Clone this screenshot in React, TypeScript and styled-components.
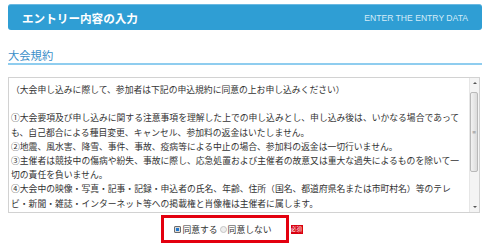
import styled, { createGlobalStyle } from "styled-components";

const GlobalStyle = createGlobalStyle`
    html, body {
        margin: 0;
        padding: 0;
        background: #ffffff;
    }
    body {
        font-family: "Noto Sans CJK JP", "Noto Sans", sans-serif;
        color: #333333;
    }
`

const JP = `"Noto Sans CJK JP", "Noto Sans", sans-serif`;

const TERMS = [
    "（大会申し込みに際して、参加者は下記の申込規約に同意の上お申し込みください）",
    "",
    "①大会要項及び申し込みに関する注意事項を理解した上での申し込みとし、申し込み後は、いかなる場合であって",
    "も、自己都合による種目変更、キャンセル、参加料の返金はいたしません。",
    "②地震、風水害、降雪、事件、事故、疫病等による中止の場合、参加料の返金は一切行いません。",
    "③主催者は競技中の傷病や紛失、事故に際し、応急処置および主催者の故意又は重大な過失によるものを除いて一",
    "切の責任を負いません。",
    "④大会中の映像・写真・記事・記録・申込者の氏名、年齢、住所（国名、都道府県名または市町村名）等のテレ",
    "ビ・新聞・雑誌・インターネット等への掲載権と肖像権は主催者に属します。",
];

const Page = styled.div`
    padding: 4px 7px 0 8px;
    width: 474px;
`

const Header = styled.div`
    height: 26px;
    display: flex;
    align-items: center;
    justify-content: space-between;
    padding: 0 14px;
    background-color: #2f9ed4;
    border-top: 1px solid #6ab9e2;
    border-radius: 3px;
    box-sizing: border-box;
`

const HeaderTitle = styled.div`
    font-family: ${JP};
    font-weight: 700;
    font-size: 11.6px;
    color: #ffffff;
`

const HeaderSub = styled.div`
    font-family: "Liberation Sans", Arial, sans-serif;
    font-size: 8.6px;
    color: #d4ecf8;
`

const SectionTitle = styled.div`
    margin-top: 18px;
    font-family: ${JP};
    font-size: 11.3px;
    line-height: 15px;
    color: #3a8ec8;
    border-bottom: 2px solid #8fcdef;
`

const TermsBox = styled.div`
    margin-top: 12px;
    height: 136px;
    display: flex;
    border: 1px solid #d2d2d2;
    box-sizing: border-box;
    width: 472px;
`

const TermsText = styled.div`
    flex: 1;
    overflow: hidden;
    padding: 5px 0 0 2px;
    font-family: ${JP};
    font-size: 8.8px;
    line-height: 14.2px;
    color: #333333;
    white-space: pre;
`

const ScrollBar = styled.div`
    width: 9px;
    display: flex;
    flex-direction: column;
    background: #f4f4f4;
    border-left: 1px solid #e6e6e6;
`

const ScrollArrow = styled.div<{ $down?: boolean }>`
    height: 10px;
    display: flex;
    align-items: center;
    justify-content: center;
    &::after {
        content: "";
        border-left: 2px solid transparent;
        border-right: 2px solid transparent;
        ${p => p.$down ? "border-top: 2px solid #555;" : "border-bottom: 2px solid #555;"}
    }
`

const ScrollTrack = styled.div`
    flex: 1;
    display: flex;
    flex-direction: column;
`

const ScrollThumb = styled.div`
    margin-top: 4px;
    height: 78px;
    margin-right: 1px;
    border: 1px solid #b9b9b9;
    border-radius: 2px;
    background: linear-gradient(to right, #f2f2f2, #dcdcdc);
    display: flex;
    align-items: center;
    justify-content: center;
    font-family: "DejaVu Sans", sans-serif;
    font-size: 5px;
    color: #888;
`

const AgreeRow = styled.div`
    margin-top: 2px;
    display: flex;
    justify-content: center;
    align-items: center;
    padding-right: 26px;
    gap: 2px;
`

const AgreeBox = styled.div`
    height: 28px;
    box-sizing: border-box;
    border: 3px solid #e3000f;
    display: flex;
    align-items: center;
    padding: 0 12px 0 10px;
`

const Choice = styled.label`
    display: flex;
    align-items: center;
    font-family: ${JP};
    font-size: 8.8px;
    color: #333333;
    margin-right: 2px;
`

const Radio = styled.input`
    appearance: none;
    margin: 0 1px 0 0;
    width: 7px;
    height: 7px;
    box-sizing: border-box;
    border: 1px solid #c4c4c4;
    border-radius: 50%;
    background: #eeeeee;
    &:checked {
        border: 1px solid #6c6c6c;
        border-radius: 1px;
        background: radial-gradient(circle, #1f78cf 0 1.6px, #dadada 2px);
    }
`

const Badge = styled.span`
    width: 12px;
    height: 9px;
    margin-top: 1px;
    background: #d9000f;
    color: #ffffff;
    font-family: ${JP};
    font-size: 5.5px;
    line-height: 9px;
    text-align: center;
`

export default function App() {
    return (
        <Page>
            <GlobalStyle />
            <Header>
                <HeaderTitle>エントリー内容の入力</HeaderTitle>
                <HeaderSub>ENTER THE ENTRY DATA</HeaderSub>
            </Header>

            <SectionTitle>大会規約</SectionTitle>

            <TermsBox>
                <TermsText>{TERMS.join("\n")}</TermsText>
                <ScrollBar>
                    <ScrollArrow />
                    <ScrollTrack>
                        <ScrollThumb>≡</ScrollThumb>
                    </ScrollTrack>
                    <ScrollArrow $down />
                </ScrollBar>
            </TermsBox>

            <AgreeRow>
                <AgreeBox>
                    <Choice>
                        <Radio type="radio" name="agree" defaultChecked />
                        同意する
                    </Choice>
                    <Choice>
                        <Radio type="radio" name="agree" />
                        同意しない
                    </Choice>
                </AgreeBox>
                <Badge>必須</Badge>
            </AgreeRow>
        </Page>
    )
}
